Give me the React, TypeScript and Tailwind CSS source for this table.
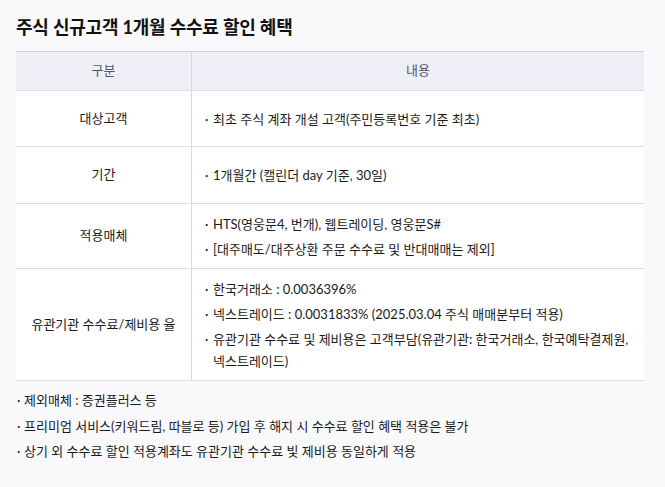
export default function App() {
  const font = { fontFamily: 'Lato, "Noto Sans CJK KR", sans-serif' };
  const Bullet = ({ children, w }: { children: React.ReactNode; w: string }) => (
    <div className="flex leading-[22px]">
      <span className={`${w} shrink-0`}>·</span>
      <span>{children}</span>
    </div>
  );
  const rows: { label: string; h: string; items: React.ReactNode[] }[] = [
    { label: "대상고객", h: "h-[56px]", items: ["최초 주식 계좌 개설 고객(주민등록번호 기준 최초)"] },
    { label: "기간", h: "h-[57px]", items: ["1개월간 (캘린더 day 기준, 30일)"] },
    {
      label: "적용매체",
      h: "h-[65px]",
      items: ["HTS(영웅문4, 번개), 웹트레이딩, 영웅문S#", "[대주매도/대주상환 주문 수수료 및 반대매매는 제외]"],
    },
    {
      label: "유관기관 수수료/제비용 율",
      h: "h-[112px]",
      items: [
        "한국거래소 : 0.0036396%",
        "넥스트레이드 : 0.0031833% (2025.03.04 주식 매매분부터 적용)",
        <>
          유관기관 수수료 및 제비용은 고객부담(유관기관: 한국거래소, 한국예탁결제원,
          <br />
          넥스트레이드)
        </>,
      ],
    },
  ];
  return (
    <div className="min-h-[487px] w-[665px] bg-[#f9f9fb] text-[#1a1a1a] pt-[14px]" style={font}>
      <h1 className="px-4 text-[18px] font-bold leading-[26px] text-[#111] tracking-[-0.2px]">
        주식 신규고객 1개월 수수료 할인 혜택
      </h1>
      <div className="mx-4 mt-[11px] w-[628px] bg-white text-[13px]">
        <div className="grid grid-cols-[176px_1fr] h-[40px] bg-[#efeff8] border-t border-t-[#cfcbed] border-b border-b-[#dcdcf0] text-[#555566]">
          <div className="flex items-center justify-center border-r border-r-[#d6d6ef]">구분</div>
          <div className="flex items-center justify-center">내용</div>
        </div>
        {rows.map((r, i) => (
          <div key={i} className={`grid grid-cols-[176px_1fr] ${r.h} border-b border-b-[#dcdcf0]`}>
            <div className="flex items-center justify-center border-r border-r-[#d6d6ef]">{r.label}</div>
            <div className="flex flex-col justify-center gap-[3px] pl-[13px] pr-3">
              {r.items.map((it, j) => (
                <Bullet key={j} w="w-[8px]">{it}</Bullet>
              ))}
            </div>
          </div>
        ))}
      </div>
      <div className="mt-[8px] flex flex-col gap-[3.5px] pl-[17px] pr-4 text-[13px]">
        {[
          "제외매체 : 증권플러스 등",
          "프리미엄 서비스(키워드림, 따블로 등) 가입 후 해지 시 수수료 할인 혜택 적용은 불가",
          "상기 외 수수료 할인 적용계좌도 유관기관 수수료 빛 제비용 동일하게 적용",
        ].map((t, i) => (
          <Bullet key={i} w="w-[7px]">{t}</Bullet>
        ))}
      </div>
    </div>
  );
}
